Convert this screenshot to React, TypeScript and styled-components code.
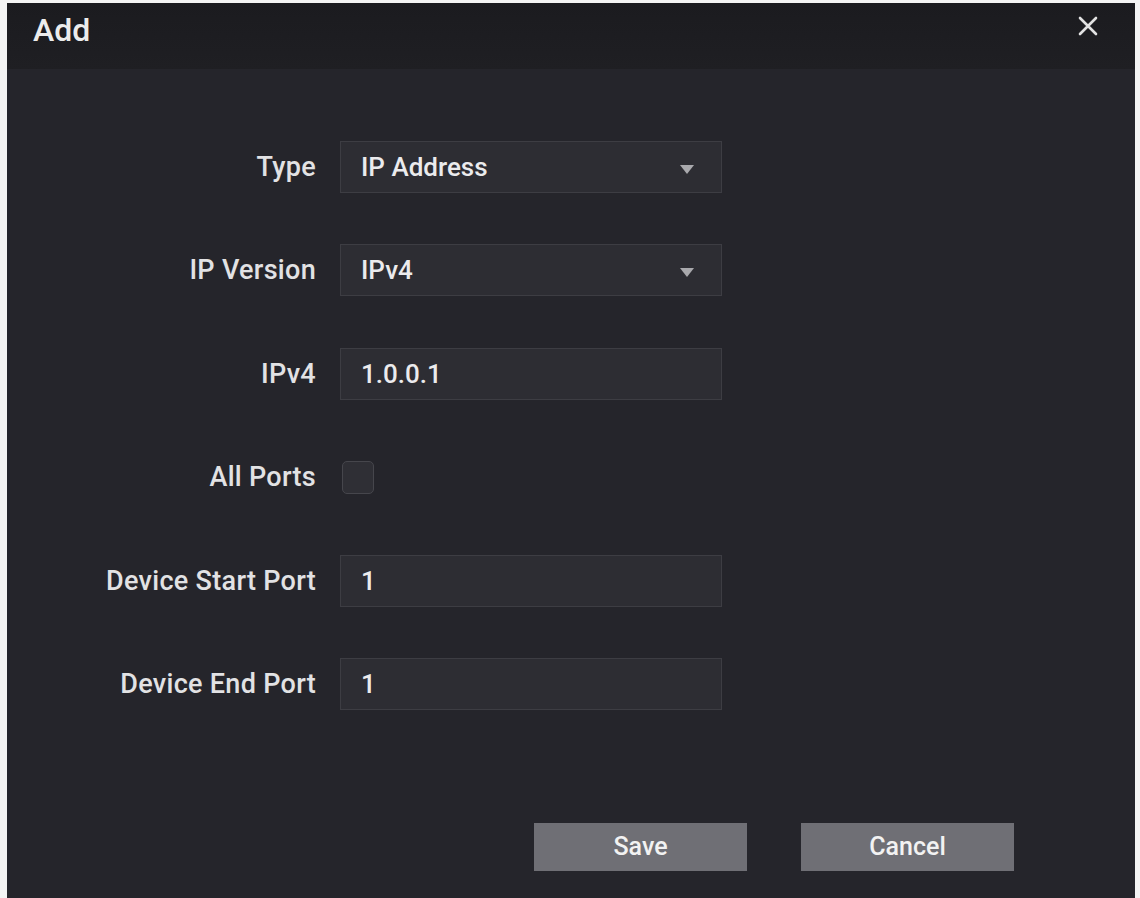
import styled, { createGlobalStyle } from 'styled-components';

const GlobalStyle = createGlobalStyle`
  html, body {
    margin: 0;
    padding: 0;
    background: #f4f4f4;
  }
  * {
    box-sizing: border-box;
  }
`;

const Dialog = styled.div`
  margin: 3px 5px 0 7px;
  height: 895px;
  display: flex;
  flex-direction: column;
  background-color: #25252b;
  font-family: Roboto, 'Liberation Sans', Arial, sans-serif;
  color: #e4e4e6;
  overflow: hidden;
`;

const Header = styled.header`
  height: 66px;
  padding: 0 26px;
  display: flex;
  align-items: center;
  justify-content: space-between;
  background: linear-gradient(#1b1b1f, #1f1f23);

  h1 {
    margin: 0;
    font-size: 32px;
    font-weight: 500;
    color: #ececec;
    transform: translateY(-6px);
  }
`;

const CloseButton = styled.button`
  width: 28px;
  height: 28px;
  padding: 0;
  border: none;
  background: transparent;
  display: flex;
  align-items: center;
  justify-content: center;
  cursor: pointer;
  transform: translate(-7px, -10px);
`;

const Form = styled.div`
  padding-top: 72px;
  display: grid;
  grid-template-columns: 309px 382px;
  column-gap: 24px;
  row-gap: 51.4px;
  align-items: center;
`;

const Label = styled.label`
  text-align: right;
  font-size: 27px;
  font-weight: 500;
  color: #e2e2e4;
  white-space: nowrap;
  letter-spacing: 0.3px;
`;

const Field = styled.div<{ select?: boolean }>`
  height: 52px;
  padding: 0 27px 0 20px;
  display: flex;
  align-items: center;
  justify-content: space-between;
  background-color: #2d2d33;
  border: 1px solid #3d3d43;
  font-size: 26px;
  font-weight: 500;
  color: #ebebed;
`;

const Caret = styled.span`
  width: 0;
  height: 0;
  border-left: 7px solid transparent;
  border-right: 7px solid transparent;
  border-top: 9px solid #a9a9ad;
  margin-top: 4px;
`;

const CheckRow = styled.div`
  height: 52px;
  display: flex;
  align-items: center;
`;

const Checkbox = styled.span`
  width: 32px;
  height: 33px;
  margin-left: 2px;
  border-radius: 5px;
  background-color: #2f2f35;
  border: 1px solid #46464c;
`;

const Footer = styled.div`
  margin-top: 113px;
  padding-right: 121px;
  display: flex;
  justify-content: flex-end;
  gap: 54px;
`;

const Button = styled.button`
  width: 213px;
  height: 48px;
  border: none;
  background-color: #6f6f75;
  color: #f2f2f2;
  font-family: Roboto, 'Liberation Sans', Arial, sans-serif;
  font-size: 25px;
  font-weight: 500;
  cursor: pointer;
`;

type Row = { label: string; value: string; select?: boolean };

const topRows: Row[] = [
  { label: 'Type', value: 'IP Address', select: true },
  { label: 'IP Version', value: 'IPv4', select: true },
  { label: 'IPv4', value: '1.0.0.1' },
];

const portRows: Row[] = [
  { label: 'Device Start Port', value: '1' },
  { label: 'Device End Port', value: '1' },
];

const renderRow = (row: Row) => [
  <Label key={row.label + '-l'}>{row.label}</Label>,
  <Field key={row.label + '-f'} select={row.select}>
    <span>{row.value}</span>
    {row.select && <Caret />}
  </Field>,
];

export default function App() {
  return (
    <>
      <GlobalStyle />
      <Dialog>
        <Header>
          <h1>Add</h1>
          <CloseButton aria-label='close'>
            <svg width='22' height='22' viewBox='0 0 22 22'>
              <path
                d='M3 3 L19 19 M19 3 L3 19'
                stroke='#e2e2e2'
                strokeWidth='2.6'
                strokeLinecap='round'
              />
            </svg>
          </CloseButton>
        </Header>
        <Form>
          {topRows.map(renderRow)}
          <Label>All Ports</Label>
          <CheckRow>
            <Checkbox />
          </CheckRow>
          {portRows.map(renderRow)}
        </Form>
        <Footer>
          <Button>Save</Button>
          <Button>Cancel</Button>
        </Footer>
      </Dialog>
    </>
  );
}
